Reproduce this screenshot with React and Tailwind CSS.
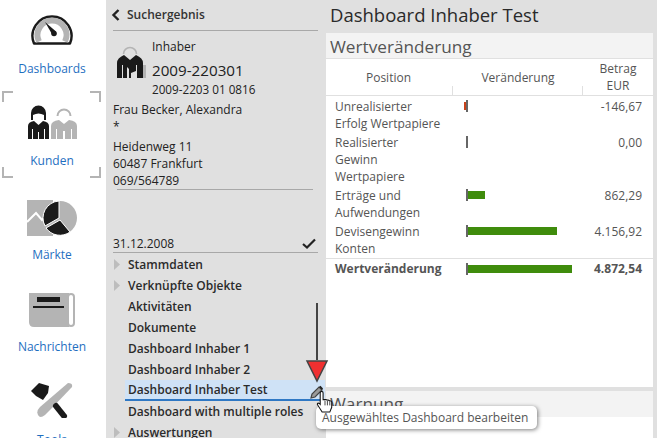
const font = { fontFamily: '"Open Sans", sans-serif' }

function DashIcon() {
  return (
    <svg width="42" height="33" viewBox="0 0 42 33">
      <path d="M3 31.5 A19.5 19.5 0 1 1 39 31.5 Z" fill="none" stroke="#1a1a1a" strokeWidth="2.4" strokeLinejoin="round" />
      <path d="M8 29.5 A14.5 14.5 0 1 1 34 29.5" fill="none" stroke="#b4b4b4" strokeWidth="6" />
      <path d="M14 10 L25 19.5 L21.5 23 Z" fill="#1a1a1a" />
      <circle cx="23" cy="21.5" r="2.8" fill="#1a1a1a" />
    </svg>
  )
}

function KundenIcon() {
  return (
    <div className="flex gap-[2px]">
      <svg width="21" height="34" viewBox="0 0 21 34">
        <path d="M3 15 V8 A7.5 7.5 0 0 1 18 8 V15 H16 V10 Q10.5 7 5 10 V15 Z" fill="#1a1a1a" />
        <path d="M0 34 V21 Q0 17 6 16 L10.5 20 L15 16 Q21 17 21 21 V34 H17 V24 H16 V34 H11 V27 H10 V34 H5 V24 H4 V34 Z" fill="#1a1a1a" />
      </svg>
      <svg width="26" height="34" viewBox="0 0 26 34">
        <path d="M6.5 11 A6.5 6.5 0 0 1 19.5 11" fill="none" stroke="#b4b4b4" strokeWidth="2" />
        <path d="M0 34 V21 Q0 16 8 15 L13 19 L18 15 Q26 16 26 21 V34 H21 V24 H20 V34 H14 V26 H12 V34 H6 V24 H5 V34 Z" fill="#b4b4b4" />
      </svg>
    </div>
  )
}

function MarktIcon() {
  return (
    <svg width="50" height="36" viewBox="0 0 50 36">
      <path d="M0 0 H26 V36 H0 Z" fill="#b4b4b4" />
      <path d="M0 22 L9 13 L15 20 L26 8" fill="none" stroke="#fff" strokeWidth="2" />
      <circle cx="33" cy="18" r="17" fill="#b4b4b4" />
      <path d="M32 1 A17 17 0 0 0 18 26 L32 18 Z" fill="#1a1a1a" stroke="#fff" strokeWidth="1" />
      <path d="M19 28 L33 20 L43 32 A17 17 0 0 1 19 28 Z" fill="#1a1a1a" stroke="#fff" strokeWidth="1" />
    </svg>
  )
}

function NewsIcon() {
  return (
    <svg width="46" height="34" viewBox="0 0 46 34">
      <path d="M0 0 H40 V34 H5 Q0 34 0 29 Z" fill="#b4b4b4" />
      <rect x="8" y="4" width="23" height="5" fill="#1a1a1a" />
      <rect x="4" y="13" width="31" height="2" fill="#1a1a1a" />
      <rect x="39" y="1" width="6" height="32" rx="3" fill="#fff" stroke="#b4b4b4" strokeWidth="2" />
    </svg>
  )
}

function ToolsIcon() {
  return (
    <svg width="42" height="36" viewBox="0 0 42 36">
      <path d="M37 1 Q42 1 41 5 L20 27 L14 33 Q9 37 7 33 Q5 29 9 25 L16 19 Z" fill="#b4b4b4" />
      <path d="M0 9 L8 1 L18 4 L17 11 L12 18 L5 14 Z" fill="#1a1a1a" />
      <path d="M25 24 L33 34" stroke="#1a1a1a" strokeWidth="6" strokeLinecap="round" />
    </svg>
  )
}

function Corner({ className }) {
  return <div className={`absolute w-[11px] h-[11px] border-[#b4b4b4] ${className}`} />
}

function NavItem({ icon, label, iconClass, selected }) {
  return (
    <div className={`relative flex flex-col items-center ${iconClass}`}>
      {selected && (
        <>
          <Corner className="left-[2px] top-0 border-l-2 border-t-2" />
          <Corner className="right-[3px] top-0 border-r-2 border-t-2" />
          <Corner className="left-[2px] bottom-0 border-l-2 border-b-2" />
          <Corner className="right-[3px] bottom-0 border-r-2 border-b-2" />
        </>
      )}
      {icon}
      <span className="text-[12px] leading-[17px] text-[#1f6fbf]">{label}</span>
    </div>
  )
}

const treeItems = [
  { label: 'Stammdaten', arrow: true },
  { label: 'Verknüpfte Objekte', arrow: true },
  { label: 'Aktivitäten' },
  { label: 'Dokumente' },
  { label: 'Dashboard Inhaber 1' },
  { label: 'Dashboard Inhaber 2' },
  { label: 'Dashboard Inhaber Test', active: true },
  { label: 'Dashboard with multiple roles' },
  { label: 'Auswertungen', arrow: true },
]

const rows = [
  { label: ['Unrealisierter', 'Erfolg Wertpapiere'], bar: 3, neg: true, value: '-146,67' },
  { label: ['Realisierter', 'Gewinn', 'Wertpapiere'], bar: 0, value: '0,00' },
  { label: ['Erträge und', 'Aufwendungen'], bar: 18, value: '862,29' },
  { label: ['Devisengewinn', 'Konten'], bar: 90, value: '4.156,92' },
]

function Bar({ width, neg }) {
  return (
    <div className="relative h-[17px] w-full">
      {width > 0 && (
        <div
          className={`absolute top-[4px] h-[8px] ${neg ? 'bg-[#c8421a]' : 'bg-[#3f8c0c]'}`}
          style={neg ? { left: 13 - width + 1, width } : { left: 14, width }}
        />
      )}
      <div className="absolute left-[13px] top-[2px] w-[2px] h-[12px] bg-[#666]" />
    </div>
  )
}

export default function App() {
  return (
    <div style={font} className="relative flex w-[657px] h-[438px] overflow-hidden bg-[#e0e0e0] text-[#222]">
      {/* left nav */}
      <div className="w-[106px] shrink-0 bg-white pr-[2px]">
        <NavItem iconClass="pt-[12px] h-[91px]" icon={<DashIcon />} label={<span className="block mt-[15px]">Dashboards</span>} />
        <NavItem selected iconClass="pt-[14px] h-[87px]" icon={<KundenIcon />} label={<span className="block mt-[13px]">Kunden</span>} />
        <NavItem iconClass="pt-[22px] h-[92px]" icon={<MarktIcon />} label={<span className="block mt-[10px]">Märkte</span>} />
        <NavItem iconClass="pt-[23px] h-[92px]" icon={<NewsIcon />} label={<span className="block mt-[11px]">Nachrichten</span>} />
        <NavItem iconClass="pt-[20px]" icon={<ToolsIcon />} label={<span className="block mt-[13px]">Tools</span>} />
      </div>

      {/* middle panel */}
      <div className="w-[220px] shrink-0 text-[12px]">
        <div className="flex items-center h-[30px] pl-[5px] font-semibold text-[12px] text-[#333]">
          <svg width="10" height="12" viewBox="0 0 10 12" className="mr-[6px]">
            <path d="M7.5 1 L2.5 6 L7.5 11" fill="none" stroke="#222" strokeWidth="2.4" />
          </svg>
          Suchergebnis
        </div>
        <div className="mx-[7px] w-[205px] h-[4px] border-t border-[#a8a8a8]" />
        <div className="flex pl-[7px]">
          <div className="relative w-[39px] h-[45px]">
            <svg width="29" height="36" viewBox="0 0 29 36" className="absolute left-[4px] top-[9px]">
              <path d="M6.5 11 A6.5 6.5 0 0 1 19.5 11" fill="none" stroke="#b4b4b4" strokeWidth="1.6" />
              <path d="M0 35 V20 Q0 15 7 12 L13 17 L19 12 Q26 15 26 20 V35 H20 V22 H19 V28 L14 30 V35 H12 V26 L10 24 V35 H6 V22 H5 V35 Z" fill="#1a1a1a" />
              <path d="M26 22 H29 V35 H26 Z" fill="#b4b4b4" />
            </svg>
          </div>
          <div className="pt-[4px]">
            <div className="text-[12px] leading-[18px]">Inhaber</div>
            <div className="text-[15.2px] leading-[22px] mt-[3px]">2009-220301</div>
            <div className="text-[11.7px] leading-[17px]">2009-2203 01 0816</div>
          </div>
        </div>
        <div className="pl-[7px] text-[12px] leading-[17px]">
          <div className="mt-[3px]">Frau Becker, Alexandra</div>
          <div className="h-[20px]">*</div>
          <div>Heidenweg 11</div>
          <div>60487 Frankfurt</div>
          <div>069/564789</div>
        </div>
        <div className="ml-[11px] w-[196px] border-t border-[#a8a8a8]" />
        <div className="flex items-center justify-between mt-[45px] ml-[7px] w-[205px] h-[17px] leading-[17px]">
          <span>31.12.2008</span>
          <svg width="14" height="11" viewBox="0 0 14 11" className="mr-[2px]">
            <path d="M1 6 L5 9.5 L13 1.5" fill="none" stroke="#222" strokeWidth="2.2" />
          </svg>
        </div>
        <div className="ml-[7px] w-[205px] border-t border-[#a8a8a8]" />
        <div className="mt-[1px] font-semibold text-[12px] text-[#2b2b2b]">
          {treeItems.map(item => (
            <div
              key={item.label}
              className={item.active
                ? 'flex items-center h-[21px] ml-[19px] pl-[3px] w-[200px] bg-[#cfe2f6] border-b-2 border-[#2f78c4]'
                : 'relative flex items-center h-[21px] pl-[22px] w-[220px]'}
            >
              {item.arrow && (
                <svg width="6" height="11" viewBox="0 0 6 11" className="absolute left-[8px] top-[5px]">
                  <path d="M0 0 L6 5.5 L0 11 Z" fill="#bdbdbd" />
                </svg>
              )}
              {item.label}
            </div>
          ))}
        </div>
      </div>

      {/* main */}
      <div className="flex-1 min-w-0">
        <div className="h-[33px] pl-[4px] text-[18.5px] leading-[30px] text-[#2a2a2a]">Dashboard Inhaber Test</div>
        <div className="w-[327px] h-[354px] bg-white text-[12px] text-[#555]">
          <div className="h-[26px] bg-[#f3f3f3] pl-[4px] text-[17.2px] leading-[27px] border-b border-[#e0e0e0]">Wertveränderung</div>
          <div className="flex h-[37px] border-b border-[#e0e0e0] text-center leading-[17px]">
            <div className="w-[127px] flex items-center justify-center pr-[2px] relative">
              Position
              <div className="absolute right-0 bottom-0 w-px h-[9px] bg-[#e0e0e0]" />
            </div>
            <div className="w-[130px] flex items-center justify-center relative">
              Veränderung
              <div className="absolute right-0 bottom-0 w-px h-[9px] bg-[#e0e0e0]" />
            </div>
            <div className="w-[70px] flex flex-col justify-center"><span>Betrag</span><span>EUR</span></div>
          </div>
          <div className="pt-[2px]">
            {rows.map((row, i) => (
              <div key={row.value} className={`flex leading-[17px] ${i < 3 ? 'mb-[2px]' : 'mb-[1px]'}`}>
                <div className="w-[127px] pl-[9px]">
                  {row.label.map(line => <div key={line}>{line}</div>)}
                </div>
                <div className="w-[130px]"><Bar width={row.bar} neg={row.neg} /></div>
                <div className="w-[59px] text-right">{row.value}</div>
              </div>
            ))}
          </div>
          <div className="flex items-center border-t border-[#e0e0e0] h-[21px] font-bold">
            <div className="w-[127px] pl-[9px]">Wertveränderung</div>
            <div className="w-[130px]"><Bar width={105} /></div>
            <div className="w-[59px] text-right">4.872,54</div>
          </div>
        </div>
        <div className="mt-[4px] w-[327px] h-[26px] bg-[#f3f3f3] pl-[4px] text-[17.2px] leading-[26px] text-[#555]">Warnung</div>
        <div className="w-[327px] h-[30px] bg-white" />
      </div>

      {/* arrow annotation */}
      <svg width="24" height="80" viewBox="0 0 24 80" className="absolute left-[305px] top-[303px]">
        <path d="M12 0 V57" stroke="#444" strokeWidth="2" />
        <path d="M2 58 H22 L12 78 Z" fill="#f03030" stroke="#444" strokeWidth="1.5" />
      </svg>

      {/* tooltip */}
      <div className="absolute left-[316px] top-[406px] h-[23px] pl-[6px] pr-[9px] rounded-[5px] bg-white shadow-[1px_1px_4px_rgba(0,0,0,0.5)] text-[12px] leading-[23px] text-[#555] whitespace-nowrap">
        Ausgewähltes Dashboard bearbeiten
      </div>

      {/* pencil */}
      <svg width="14" height="14" viewBox="0 0 14 14" className="absolute left-[310px] top-[385px]">
        <path d="M1 13 L2 9 L9 2 L12 5 L5 12 Z" fill="#9a9a9a" stroke="#444" strokeWidth="1.2" />
        <path d="M9 2 L10.5 0.8 L13 3.5 L12 5 Z" fill="#222" />
      </svg>

      {/* hand cursor */}
      <svg width="18" height="23" viewBox="0 0 18 24" className="absolute left-[316px] top-[391px]">
        <path d="M4 2 Q4 0.5 5.5 0.5 Q7 0.5 7 2 V9 L9 9 Q10.5 8.5 11 9.5 Q13 9 13.5 10.3 Q15.5 10 16 11.5 V17 L14 22 H6 L1 14 Q1 12 3 13 L4 14 Z" fill="#fff" stroke="#111" strokeWidth="1.1" />
        <path d="M9 10 V15 M11.5 10 V15 M14 11 V15" stroke="#111" strokeWidth="0.8" />
      </svg>
    </div>
  )
}
